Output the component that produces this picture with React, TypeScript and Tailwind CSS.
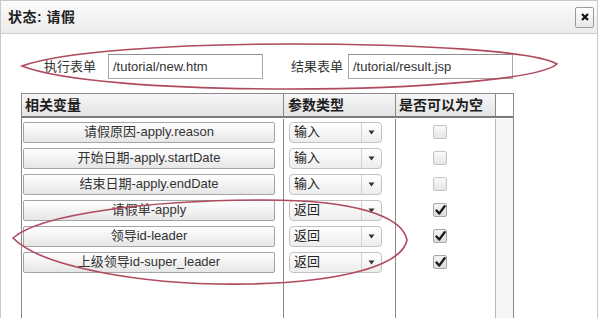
import React from "react";

const FONT = { fontFamily: '"Liberation Sans", Arial, "Noto Sans CJK SC", sans-serif' };

type Row = { name: string; type: string; checked: boolean };

const rows: Row[] = [
  { name: "请假原因-apply.reason", type: "输入", checked: false },
  { name: "开始日期-apply.startDate", type: "输入", checked: false },
  { name: "结束日期-apply.endDate", type: "输入", checked: false },
  { name: "请假单-apply", type: "返回", checked: true },
  { name: "领导id-leader", type: "返回", checked: true },
  { name: "上级领导id-super_leader", type: "返回", checked: true },
];

function Checkbox({ checked }: { checked: boolean }) {
  return (
    <div
      className={
        "w-[14px] h-[14px] border rounded-[2px] flex items-center justify-center " +
        (checked
          ? "border-[#a8a8a8] bg-gradient-to-b from-[#f4f4f4] to-[#dcdcdc]"
          : "border-[#c4c4c4] bg-gradient-to-b from-[#fafafa] to-[#e6e6e6]")
      }
    >
      {checked && (
        <svg width="11" height="11" viewBox="0 0 11 11">
          <path d="M1.5 5.5 L4.2 8.6 L9.6 1.2" fill="none" stroke="#1a1a1a" strokeWidth="2.3" strokeLinecap="round" strokeLinejoin="round" />
        </svg>
      )}
    </div>
  );
}

function Select({ value }: { value: string }) {
  return (
    <div className="w-[93px] h-[21px] border border-[#c2c2c2] rounded-[4px] flex bg-gradient-to-b from-white to-[#ededed] overflow-hidden">
      <div className="flex-1 flex items-center pl-[4px] text-[13px] text-[#222] border-r border-[#d2d2d2]">{value}</div>
      <div className="w-[19px] flex items-center justify-center">
        <svg width="7" height="5" viewBox="0 0 7 5">
          <path d="M0.5 0.5 L6.5 0.5 L3.5 4.5 Z" fill="#333" />
        </svg>
      </div>
    </div>
  );
}

export default function App() {
  return (
    <div className="w-[604px] h-[318px] overflow-hidden bg-white relative" style={FONT}>
      <div className="w-[598px] h-full border-x border-t border-[#c8c8c8] flex flex-col bg-white">
        {/* Title bar */}
        <div className="h-[33px] shrink-0 border-b border-[#cfcfcf] bg-gradient-to-b from-[#fbfbfb] to-[#ececec] flex items-center justify-between pl-[7px] pr-[3px]">
          <div className="text-[14px] font-bold text-[#1e1e1e] tracking-[0.5px]">状态: 请假</div>
          <div className="w-[19px] h-[21px] border border-[#9a9a9a] rounded-[2px] bg-gradient-to-b from-white to-[#e8e8e8] flex items-center justify-center">
            <svg width="8" height="8" viewBox="0 0 8 8">
              <path d="M1 1 L7 7 M7 1 L1 7" stroke="#111" strokeWidth="2.2" />
            </svg>
          </div>
        </div>

        {/* Form row */}
        <div className="mt-[20px] h-[25px] shrink-0 flex items-center pl-[43px] text-[13px] text-[#333]">
          <div className="w-[52px]">执行表单</div>
          <div className="ml-[12px] w-[155px] h-[25px] border border-[#a8a8a8] border-t-[#8f8f8f] bg-white flex items-center pl-[4px] text-[#333]">
            /tutorial/new.htm
          </div>
          <div className="ml-[28px] w-[52px]">结果表单</div>
          <div className="ml-[5px] w-[165px] h-[25px] border border-[#a8a8a8] border-t-[#8f8f8f] bg-white flex items-center pl-[4px] text-[#333]">
            /tutorial/result.jsp
          </div>
        </div>

        {/* Table */}
        <div className="mt-[14px] ml-[20px] w-[493px] flex-1 border border-[#8a8a8a] border-b-0 flex flex-col">
          <div className="h-[24px] shrink-0 grid grid-cols-[262px_112px_100px_1fr] border-b-2 border-[#7a7a7a] bg-gradient-to-b from-[#f7f7f7] to-[#e4e4e4] text-[14px] font-bold text-[#1e1e1e]">
            <div className="border-r border-[#8a8a8a] flex items-center pl-[3px]">相关变量</div>
            <div className="border-r border-[#8a8a8a] flex items-center pl-[4px]">参数类型</div>
            <div className="border-r border-[#8a8a8a] flex items-center pl-[3px]">是否可以为空</div>
            <div className="bg-white"></div>
          </div>
          <div className="pt-[1px] shrink-0">
            {rows.map((r) => (
              <div key={r.name} className="h-[26px] grid grid-cols-[262px_112px_100px_1fr]">
                <div className="border-r border-[#8a8a8a] flex items-center pl-[1px]">
                  <div className="w-[252px] h-[21px] border border-[#a4a4a4] rounded-[2px] bg-gradient-to-b from-white to-[#e6e6e6] flex items-center justify-center text-[13px] text-[#333]">
                    {r.name}
                  </div>
                </div>
                <div className="border-r border-[#8a8a8a] flex items-center pl-[5px]">
                  <Select value={r.type} />
                </div>
                <div className="border-r border-[#b8b8b8] flex items-center pl-[37px]">
                  <Checkbox checked={r.checked} />
                </div>
                <div className="bg-[#f6f6f6]"></div>
              </div>
            ))}
          </div>
          <div className="flex-1 grid grid-cols-[262px_112px_100px_1fr]">
            <div className="border-r border-[#8a8a8a]"></div>
            <div className="border-r border-[#8a8a8a]"></div>
            <div className="border-r border-[#b8b8b8]"></div>
            <div className="bg-[#f6f6f6]"></div>
          </div>
        </div>
      </div>

      {/* Hand-drawn annotation ellipses */}
      <svg className="absolute left-0 top-0 pointer-events-none" width="604" height="318" viewBox="0 0 604 318">
        <path
          d="M22 66 C60 52 170 44 290 44 C420 44 535 51 557 64 C540 79 420 89 290 89 C165 89 60 81 22 66 Z"
          fill="none"
          stroke="#b04a5e"
          strokeWidth="1.6"
        />
        <path
          d="M13 238 C40 214 150 200 265 200 C355 200 402 216 407 240 C402 266 340 282 250 284 C140 286 40 266 13 238 Z"
          fill="none"
          stroke="#b04a5e"
          strokeWidth="1.6"
        />
      </svg>
    </div>
  );
}
